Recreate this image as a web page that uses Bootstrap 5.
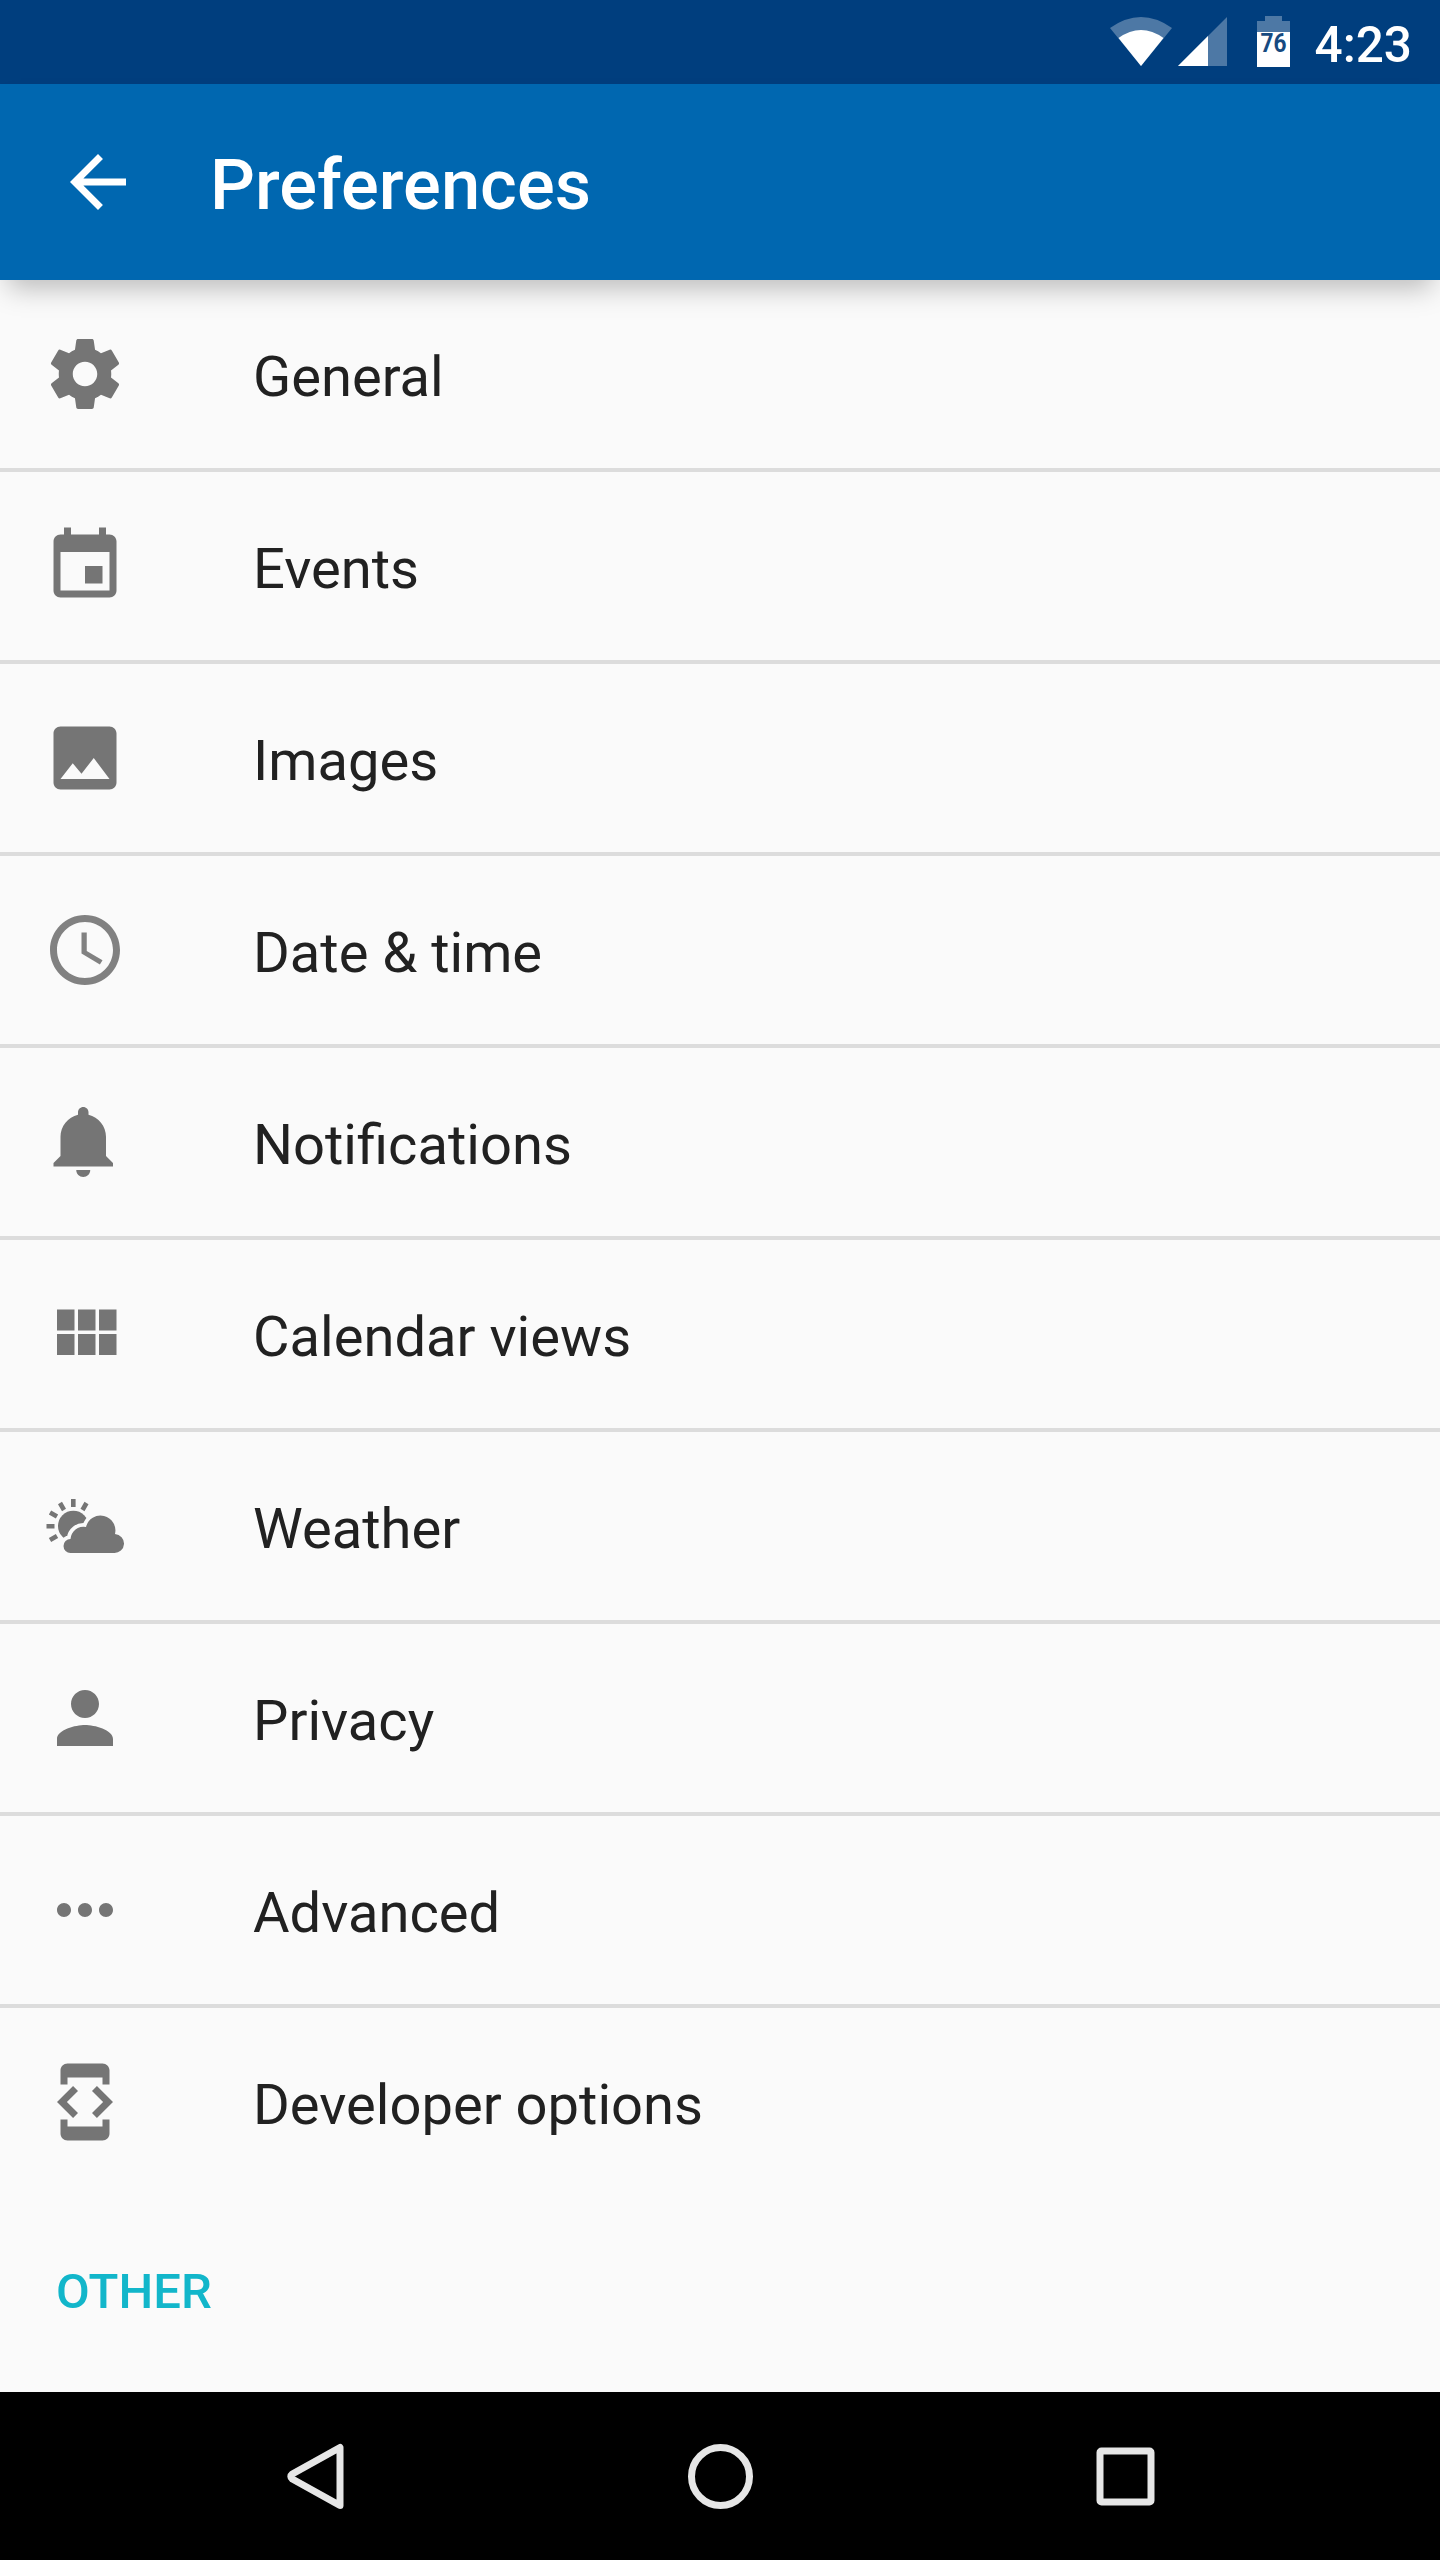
<!DOCTYPE html>
<html lang="en">
<head>
<meta charset="utf-8">
<meta name="viewport" content="width=device-width, initial-scale=1">
<title>Preferences</title>
<link href="https://cdn.jsdelivr.net/npm/bootstrap@5.3.0/dist/css/bootstrap.min.css" rel="stylesheet">
<style>
  body { font-family: Roboto, "Noto Sans", sans-serif; background: #fafafa; color: #212121; }
  .screen { height: 2560px; overflow: hidden; }
  .status-bar { height: 84px; background: #003e7e; padding-right: 28px; }
  .status-bar svg { display: block; }
  .clock { font-size: 49.500px; font-weight: 500; line-height: 84px; padding-top: 5px; margin-left: 24px; }
  .app-bar { height: 196px; background: #0067b0; padding: 0 56px; z-index: 2; box-shadow: 0 16px 26px -8px rgba(0,0,0,.26); }
  .app-title { font-size: 70.500px; font-weight: 500; line-height: 84px; margin: 5px 0 0 70px; }
  .ic { width: 84px; height: 84px; fill: currentColor; flex: none; display: block; }
  .pref-list .pref-item { height: 192px; padding: 0 43px; border: 0 solid #dcdcdc; border-bottom-width: 4px; border-radius: 0; color: #212121; background: transparent; font-size: 56.100px; line-height: 66px; }
  .pref-list .pref-item:last-child { border-bottom-color: transparent; }
  .pref-item .ic { color: #757575; margin-right: 126px; }
  .pref-item span { padding-top: 6px; }
  .section-title { font-size: 49px; font-weight: 500; line-height: 60px; color: #12b6ca; margin: 0; padding: 62px 56px 0; }
  .nav-keys { height: 168px; background: #000; padding: 0 273px; }
  .nav-keys svg { width: 84px; height: 84px; display: block; fill: none; stroke: #e6e6e6; stroke-width: 7; }
</style>
</head>
<body>
<div class="screen d-flex flex-column">
  <div class="status-bar d-flex align-items-center justify-content-end text-white flex-shrink-0">
    <svg width="185" height="84" viewBox="1106 0 185 84">
      <path d="M1110 28Q1141 6 1172 28L1141 66Z" fill="#fff" opacity=".3"/>
      <path d="M1118.500 38Q1141 22 1163.500 38L1141 66Z" fill="#fff"/>
      <path d="M1178 66L1227 17V66Z" fill="#fff" opacity=".3"/>
      <path d="M1178 66L1208 36V66Z" fill="#fff"/>
      <path d="M1265 16h17v5h8v11h-33V21h8z" fill="#fff" opacity=".3"/>
      <path d="M1257 32h33v35h-33z" fill="#fff"/>
      <text x="1273.500" y="51.500" text-anchor="middle" font-size="25" font-weight="700" font-family="Roboto, sans-serif" textLength="26" lengthAdjust="spacingAndGlyphs" fill="#174a80">76</text>
    </svg>
    <span class="clock">4:23</span>
  </div>

  <header class="app-bar d-flex align-items-center text-white position-relative flex-shrink-0">
    <svg class="ic" viewBox="0 0 24 24"><path d="M20 11H7.830l5.590-5.590L12 4l-8 8 8 8 1.410-1.410L7.830 13H20v-2z"/></svg>
    <h1 class="app-title">Preferences</h1>
  </header>

  <main class="flex-grow-1">
    <div class="list-group pref-list">
      <a class="list-group-item pref-item d-flex align-items-center"><svg class="ic" viewBox="0 0 24 24"><path d="M19.430 12.980c.04-.32.07-.64.07-.98s-.03-.66-.07-.98l2.110-1.650c.19-.15.24-.42.12-.64l-2-3.460c-.12-.22-.39-.3-.61-.22l-2.490 1c-.52-.4-1.080-.73-1.690-.98l-.38-2.650C14.460 2.180 14.250 2 14 2h-4c-.25 0-.46.18-.49.42l-.38 2.650c-.61.25-1.170.59-1.690.98l-2.490-1c-.23-.09-.49 0-.61.22l-2 3.460c-.13.22-.07.49.12.64l2.110 1.650c-.04.32-.07.65-.07.98s.03.66.07.98l-2.110 1.650c-.19.15-.24.42-.12.64l2 3.460c.12.22.39.3.61.22l2.490-1c.52.4 1.080.73 1.690.98l.38 2.650c.03.24.24.42.49.42h4c.25 0 .46-.18.49-.42l.38-2.650c.61-.25 1.170-.59 1.690-.98l2.490 1c.23.09.49 0 .61-.22l2-3.460c.12-.22.07-.49-.12-.64l-2.110-1.650zM12 15.500c-1.930 0-3.500-1.570-3.500-3.500s1.570-3.500 3.500-3.500 3.500 1.570 3.500 3.500-1.570 3.500-3.500 3.500z"/></svg><span>General</span></a>
      <a class="list-group-item pref-item d-flex align-items-center"><svg class="ic" viewBox="0 0 24 24"><path d="M17 12h-5v5h5v-5zM16 1v2H8V1H6v2H5c-1.110 0-1.990.9-1.990 2L3 19c0 1.100.89 2 2 2h14c1.100 0 2-.9 2-2V5c0-1.100-.9-2-2-2h-1V1h-2zm3 18H5V8h14v11z"/></svg><span>Events</span></a>
      <a class="list-group-item pref-item d-flex align-items-center"><svg class="ic" viewBox="0 0 24 24"><path d="M21 19V5c0-1.100-.9-2-2-2H5c-1.100 0-2 .9-2 2v14c0 1.100.9 2 2 2h14c1.100 0 2-.9 2-2zM8.500 13.500l2.500 3.010L14.500 12l4.500 6H5l3.500-4.500z"/></svg><span>Images</span></a>
      <a class="list-group-item pref-item d-flex align-items-center"><svg class="ic" viewBox="0 0 24 24" opacity=".9"><path d="M11.990 2C6.470 2 2 6.480 2 12s4.470 10 9.990 10C17.520 22 22 17.520 22 12S17.520 2 11.990 2zM12 20c-4.420 0-8-3.580-8-8s3.580-8 8-8 8 3.580 8 8-3.580 8-8 8z"/><path d="M12.500 7H11v6l5.250 3.150.75-1.230-4.500-2.670z"/></svg><span>Date &amp; time</span></a>
      <a class="list-group-item pref-item d-flex align-items-center"><svg class="ic" viewBox="0 0 24 24"><path d="M11.500 22c1.100 0 2-.9 2-2h-4c0 1.100.9 2 2 2zm6.500-6v-5.500c0-3.070-2.130-5.640-5-6.320V3.500c0-.83-.67-1.500-1.500-1.500S10 2.670 10 3.500v.68c-2.870.68-5 3.250-5 6.320V16l-2 2v1h17v-1l-2-2z"/></svg><span>Notifications</span></a>
      <a class="list-group-item pref-item d-flex align-items-center"><svg class="ic" viewBox="0 0 24 24"><path d="M4 11h5V5H4v6zm0 7h5v-6H4v6zm6 0h5v-6h-5v6zm6 0h5v-6h-5v6zm-6-7h5V5h-5v6zm6-6v6h5V5h-5z"/></svg><span>Calendar views</span></a>
      <a class="list-group-item pref-item d-flex align-items-center">
        <svg class="ic" viewBox="43 1484 84 84">
          <g stroke="#757575" stroke-width="4.600" fill="none">
            <path d="M73.300 1499v8M60 1503l4 7M86.500 1503l-4 7M50 1512.500l7 4M46.500 1526.300h8M50 1540l7-4"/>
          </g>
          <circle cx="73.300" cy="1526" r="15.300"/>
          <path d="M70.500 1553a7 7 0 0 1 0-14 13 13 0 0 1 15.500-12 14.500 14.500 0 0 1 29 7 9.500 9.500 0 0 1-1 19z" stroke="#fafafa" stroke-width="7.500" stroke-linejoin="round"/>
          <path d="M70.500 1553a7 7 0 0 1 0-14 13 13 0 0 1 15.500-12 14.500 14.500 0 0 1 29 7 9.500 9.500 0 0 1-1 19z"/>
        </svg><span>Weather</span></a>
      <a class="list-group-item pref-item d-flex align-items-center"><svg class="ic" viewBox="0 0 24 24"><path d="M12 12c2.210 0 4-1.790 4-4s-1.790-4-4-4-4 1.790-4 4 1.790 4 4 4zm0 2c-2.670 0-8 1.340-8 4v2h16v-2c0-2.660-5.330-4-8-4z"/></svg><span>Privacy</span></a>
      <a class="list-group-item pref-item d-flex align-items-center"><svg class="ic" viewBox="0 0 24 24"><path d="M6 10c-1.100 0-2 .9-2 2s.9 2 2 2 2-.9 2-2-.9-2-2-2zm12 0c-1.100 0-2 .9-2 2s.9 2 2 2 2-.9 2-2-.9-2-2-2zm-6 0c-1.100 0-2 .9-2 2s.9 2 2 2 2-.9 2-2-.9-2-2-2z"/></svg><span>Advanced</span></a>
      <a class="list-group-item pref-item d-flex align-items-center"><svg class="ic" viewBox="0 0 24 24"><path d="M7 5h10v2h2V3c0-1.100-.9-1.990-2-1.990L7 1c-1.100 0-2 .9-2 2v4h2V5zm8.410 11.590L20 12l-4.590-4.590L14 8.830 17.170 12 14 15.170l1.410 1.420zM10 15.170L6.830 12 10 8.830 8.590 7.410 4 12l4.590 4.590L10 15.170zM17 19H7v-2H5v4c0 1.100.9 2 2 2h10c1.100 0 2-.9 2-2v-4h-2v2z"/></svg><span>Developer options</span></a>
    </div>
    <h2 class="section-title">OTHER</h2>
  </main>

  <nav class="nav-keys d-flex align-items-center justify-content-between flex-shrink-0">
    <svg viewBox="273 2434 84 84"><path d="M340 2447.500v58L292.300 2479q-3-2.500 0-5z" stroke-linejoin="round"/></svg>
    <svg viewBox="678 2434 84 84"><circle cx="720.500" cy="2476.500" r="29"/></svg>
    <svg viewBox="1083 2434 84 84"><rect x="1100" y="2451" width="51" height="51" rx="1.500"/></svg>
  </nav>
</div>
<script src="https://cdn.jsdelivr.net/npm/bootstrap@5.3.0/dist/js/bootstrap.bundle.min.js"></script>
</body>
</html>
